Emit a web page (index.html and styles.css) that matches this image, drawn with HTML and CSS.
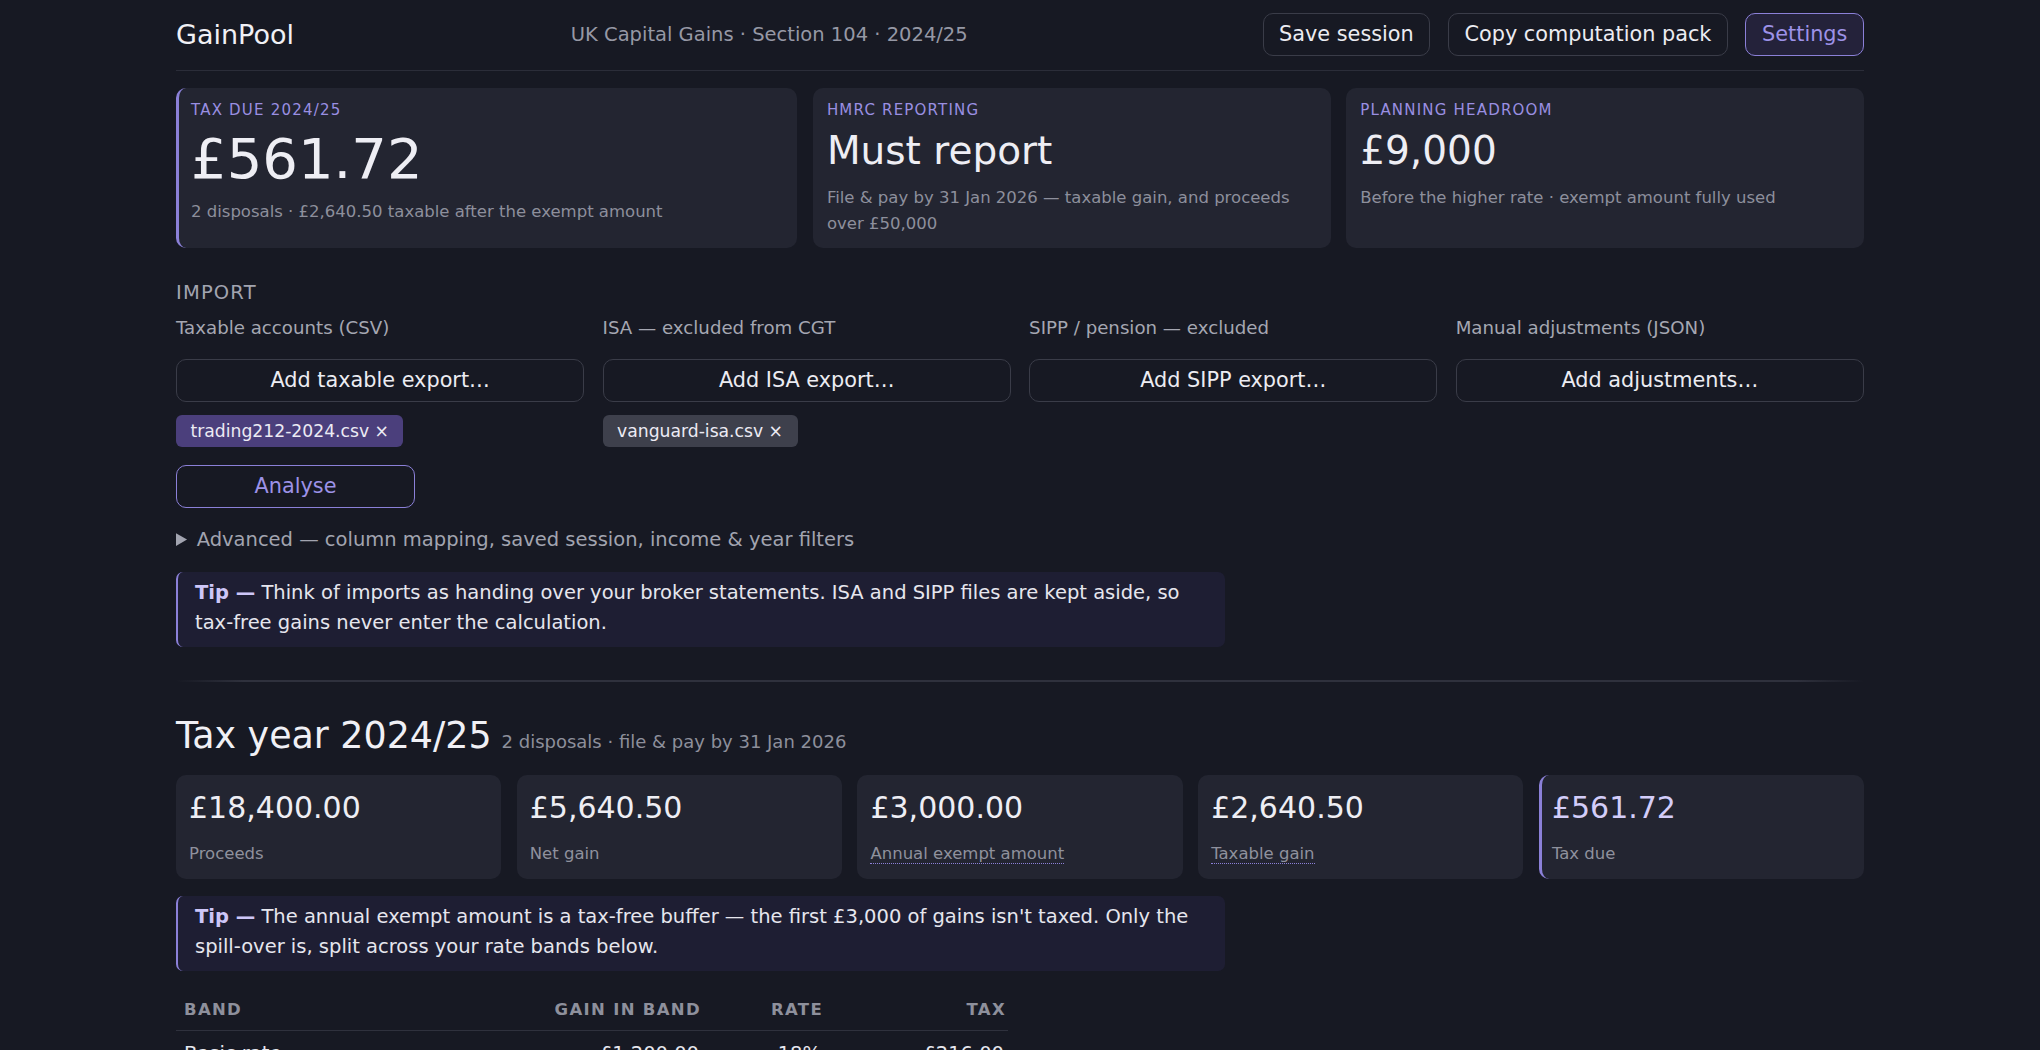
FILE: index.html
```html
<!DOCTYPE html>
<html lang="en">
<head>
    <meta charset="UTF-8">
    <meta name="viewport" content="width=device-width, initial-scale=1.0">
    <title>GainPool — UK Capital Gains</title>
    <link rel="stylesheet" href="styles.css">
</head>
<body>
<div class="page">
    <header class="topbar">
        <div class="brand">GainPool</div>
        <div class="context">UK Capital Gains · Section 104 · 2024/25</div>
        <div class="actions">
            <button class="btn">Save session</button>
            <button class="btn">Copy computation pack</button>
            <button class="btn btn-accent">Settings</button>
        </div>
    </header>

    <!-- Headline numbers -->
    <section class="summary">
        <div class="card card-main">
            <div class="card-label">Tax due 2024/25</div>
            <div class="card-value big">£561.72</div>
            <div class="card-note">2 disposals · £2,640.50 taxable after the exempt amount</div>
        </div>
        <div class="card">
            <div class="card-label">HMRC reporting</div>
            <div class="card-value">Must report</div>
            <div class="card-note">File &amp; pay by 31 Jan 2026 — taxable gain, and proceeds over £50,000</div>
        </div>
        <div class="card">
            <div class="card-label">Planning headroom</div>
            <div class="card-value">£9,000</div>
            <div class="card-note">Before the higher rate · exempt amount fully used</div>
        </div>
    </section>

    <!-- Import -->
    <section class="import">
        <h2 class="section-title">Import</h2>
        <div class="import-grid">
            <div class="slot">
                <label class="slot-label">Taxable accounts (CSV)</label>
                <button class="btn btn-wide">Add taxable export…</button>
                <div class="chips">
                    <span class="chip chip-taxable">trading212-2024.csv ×</span>
                </div>
            </div>
            <div class="slot">
                <label class="slot-label">ISA — excluded from CGT</label>
                <button class="btn btn-wide">Add ISA export…</button>
                <div class="chips">
                    <span class="chip">vanguard-isa.csv ×</span>
                </div>
            </div>
            <div class="slot">
                <label class="slot-label">SIPP / pension — excluded</label>
                <button class="btn btn-wide">Add SIPP export…</button>
            </div>
            <div class="slot">
                <label class="slot-label">Manual adjustments (JSON)</label>
                <button class="btn btn-wide">Add adjustments…</button>
            </div>
        </div>

        <button class="btn btn-primary">Analyse</button>

        <details class="advanced">
            <summary>Advanced — column mapping, saved session, income &amp; year filters</summary>
        </details>

        <p class="tip"><strong>Tip —</strong> Think of imports as handing over your broker statements. ISA and SIPP files are kept aside, so tax-free gains never enter the calculation.</p>
    </section>

    <hr class="divider">

    <!-- Year breakdown -->
    <section class="year">
        <div class="year-head">
            <h2>Tax year 2024/25</h2>
            <span class="year-meta">2 disposals · file &amp; pay by 31 Jan 2026</span>
        </div>

        <div class="stats">
            <div class="stat">
                <div class="stat-value">£18,400.00</div>
                <div class="stat-label">Proceeds</div>
            </div>
            <div class="stat">
                <div class="stat-value">£5,640.50</div>
                <div class="stat-label">Net gain</div>
            </div>
            <div class="stat">
                <div class="stat-value">£3,000.00</div>
                <div class="stat-label"><span class="term">Annual exempt amount</span></div>
            </div>
            <div class="stat">
                <div class="stat-value">£2,640.50</div>
                <div class="stat-label"><span class="term">Taxable gain</span></div>
            </div>
            <div class="stat stat-due">
                <div class="stat-value">£561.72</div>
                <div class="stat-label">Tax due</div>
            </div>
        </div>

        <p class="tip"><strong>Tip —</strong> The annual exempt amount is a tax-free buffer — the first £3,000 of gains isn't taxed. Only the spill-over is, split across your rate bands below.</p>

        <table class="bands">
            <colgroup>
                <col class="col-band">
                <col class="col-gain">
                <col class="col-rate">
                <col class="col-tax">
            </colgroup>
            <thead>
                <tr>
                    <th>Band</th>
                    <th class="num">Gain in band</th>
                    <th class="num">Rate</th>
                    <th class="num">Tax</th>
                </tr>
            </thead>
            <tbody>
                <tr>
                    <td>Basic rate</td>
                    <td class="num">£1,200.00</td>
                    <td class="num">18%</td>
                    <td class="num">£216.00</td>
                </tr>
                <tr>
                    <td>Higher rate</td>
                    <td class="num">£1,440.50</td>
                    <td class="num">24%</td>
                    <td class="num">£345.72</td>
                </tr>
            </tbody>
        </table>
    </section>
</div>
</body>
</html>
```

FILE: styles.css
```css
* {
    box-sizing: border-box;
}
body {
    margin: 0;
    background: #171923;
    color: #e9e9f0;
    font-family: "DejaVu Sans", sans-serif;
}
.page {
    max-width: 1688px;
    margin: 0 auto;
}

/* top bar */
.topbar {
    display: flex;
    justify-content: space-between;
    align-items: center;
    padding: 13px 0 14px;
    border-bottom: 1px solid #2b2d39;
}
.brand {
    font-size: 27px;
    color: #f0f0f5;
}
.context {
    margin-right: 18px;
    font-size: 19.5px;
    color: #9698a5;
}
.actions {
    display: flex;
    gap: 17.5px;
}
.btn {
    font-family: inherit;
    font-size: 20.8px;
    line-height: 25px;
    padding: 8px 15.6px;
    background: transparent;
    color: #ececf2;
    border: 1px solid #3a3c48;
    border-radius: 10px;
}
.btn-accent {
    background: #24223a;
    border-color: #8b80d8;
    color: #9d92e8;
}
.btn-wide {
    width: 100%;
    margin-top: 18px;
}
.btn-primary {
    margin-top: 18px;
    min-width: 239px;
    border-color: #8b80d8;
    color: #9d92e8;
}

/* headline cards */
.summary {
    display: grid;
    grid-template-columns: 1.2fr 1fr 1fr;
    gap: 15.6px;
    margin-top: 17px;
}
.card {
    background: #232531;
    border-radius: 10px;
    padding: 13.2px 14px 11.3px;
}
.card-main {
    border-left: 3px solid #8b80d8;
    padding-left: 12px;
}
.card-label {
    font-size: 15px;
    line-height: 18px;
    letter-spacing: 0.08em;
    text-transform: uppercase;
    color: #9a8fe2;
}
.card-value {
    margin-top: 7.7px;
    font-size: 39px;
    line-height: 48px;
    color: #eeeef4;
}
.card-value.big {
    margin-top: 7.7px;
    font-size: 56px;
    line-height: 64px;
}
.card-note {
    margin-top: 10px;
    font-size: 16.5px;
    line-height: 26px;
    color: #8d8f9c;
}
.card-main .card-note {
    margin-top: 8px;
}

/* import */
.import {
    margin-top: 32px;
}
.section-title {
    margin: 0;
    font-size: 19.5px;
    font-weight: normal;
    line-height: 25px;
    letter-spacing: 0.06em;
    text-transform: uppercase;
    color: #a2a4b0;
}
.import-grid {
    display: grid;
    grid-template-columns: repeat(4, 1fr);
    gap: 0 18.2px;
    margin-top: 10px;
}
.slot {
    display: flex;
    flex-direction: column;
    align-items: flex-start;
}
.slot-label {
    font-size: 18.2px;
    line-height: 25.5px;
    color: #a5a7b2;
}
.chips {
    display: flex;
    gap: 8px;
    margin-top: 13px;
}
.chip {
    font-size: 17.2px;
    line-height: 22px;
    padding: 5px 14.5px;
    border-radius: 6px;
    background: #3e404c;
    color: #ecebf4;
}
.chip-taxable {
    background: #4b3f7c;
}
.advanced {
    margin-top: 18px;
    font-size: 19.5px;
    line-height: 27.3px;
    color: #a2a4b0;
}
.advanced summary {
    cursor: pointer;
}

.tip {
    width: 1049px;
    margin: 19.5px 0 0;
    padding: 6px 17px 9px;
    font-size: 19.5px;
    line-height: 30px;
    background: #1e1e33;
    border-left: 2px solid #8b80d8;
    border-radius: 7px;
    color: #e6e6ee;
}
.tip strong {
    color: #cdc6f8;
}

.divider {
    height: 2px;
    margin: 33px 0 0;
    border: 0;
    background: linear-gradient(90deg, transparent, #2f313d 4%, #2f313d 96%, transparent);
}

/* tax year */
.year-head {
    display: flex;
    align-items: baseline;
    gap: 10px;
    margin-top: 32px;
}
.year-head h2 {
    margin: 0;
    font-size: 36.4px;
    font-weight: normal;
    line-height: 1.2;
    color: #f0f0f5;
}
.year-meta {
    font-size: 18px;
    color: #8d8f9b;
}
.stats {
    display: grid;
    grid-template-columns: repeat(5, 1fr);
    gap: 15.6px;
    margin-top: 17px;
}
.stat {
    background: #232531;
    border-radius: 10px;
    padding: 15px 13px 14px;
}
.stat-due {
    border-left: 3px solid #8b80d8;
    padding-left: 10px;
}
.stat-value {
    font-size: 30px;
    line-height: 36px;
    color: #eeeef4;
}
.stat-due .stat-value {
    color: #d3cdf9;
}
.stat-label {
    margin-top: 17px;
    font-size: 16.5px;
    line-height: 22px;
    color: #8f919d;
}
.term {
    border-bottom: 1px dotted #8b80d8;
}
.year .tip {
    margin-top: 17px;
}

/* rate bands */
.bands {
    width: 832px;
    margin-top: 19px;
    table-layout: fixed;
    border-collapse: collapse;
}
.col-band { width: 327px; }
.col-gain { width: 200px; }
.col-rate { width: 122px; }
.col-tax { width: 183px; }
.bands th {
    padding: 9px 2px 9px 8px;
    font-size: 16.5px;
    line-height: 21.8px;
    letter-spacing: 0.08em;
    text-transform: uppercase;
    text-align: left;
    color: #8e909c;
    border-bottom: 1px solid #2f313d;
}
.bands td {
    padding: 10px 4px 10px 8px;
    font-size: 19.5px;
    line-height: 26px;
    color: #e6e6ee;
    border-bottom: 1px solid #24262f;
}
.bands .num {
    text-align: right;
}
```
